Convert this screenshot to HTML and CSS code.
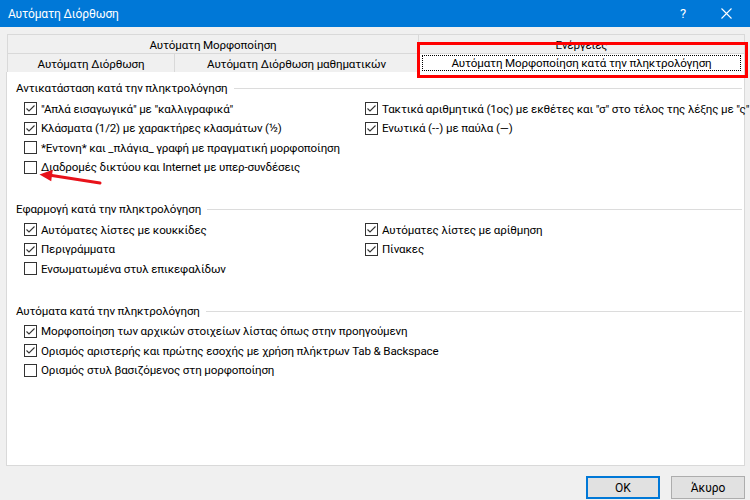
FILE: index.html
```html
<!Doctype html>
<html>
<head>
    <meta charset="UTF-8">
    <title>Αυτόματη Διόρθωση</title>
    <link rel="stylesheet" href="styles.css">
</head>
<body>
<div class="dialog">
    <div class="titlebar">
        <span class="title">Αυτόματη Διόρθωση</span>
        <span class="help">?</span>
        <svg class="close" width="11" height="11" viewBox="0 0 11 11"><path d="M0.5 0.5L10.5 10.5M10.5 0.5L0.5 10.5" stroke="#fff" stroke-width="1.1"/></svg>
    </div>

    <div class="tabs">
        <div class="tab-row">
            <div class="tab w411">Αυτόματη Μορφοποίηση</div>
            <div class="tab grow last">Ενέργειες</div>
        </div>
        <div class="tab-row">
            <div class="tab w167">Αυτόματη Διόρθωση</div>
            <div class="tab w244">Αυτόματη Διόρθωση μαθηματικών</div>
            <div class="tab grow last active"><span class="focus">Αυτόματη Μορφοποίηση κατά την πληκτρολόγηση</span></div>
        </div>
    </div>

    <div class="panel">
        <div class="group">
            <div class="legend"><span>Αντικατάσταση κατά την πληκτρολόγηση</span></div>
            <div class="opts">
                <label class="opt"><span class="box on"></span>"Απλά εισαγωγικά" με "καλλιγραφικά"</label>
                <label class="opt"><span class="box on"></span>Τακτικά αριθμητικά (1ος) με εκθέτες και "σ" στο τέλος της λέξης με "ς"</label>
                <label class="opt"><span class="box on"></span>Κλάσματα (1/2) με χαρακτήρες κλασμάτων (½)</label>
                <label class="opt"><span class="box on"></span>Ενωτικά (<span class="dd">--</span>) με παύλα (—)</label>
                <label class="opt"><span class="box"></span>*Εντονη* και _πλάγια_ γραφή με πραγματική μορφοποίηση</label>
                <label class="opt"></label>
                <label class="opt"><span class="box"></span>Διαδρομές δικτύου και Internet με υπερ-συνδέσεις</label>
            </div>
        </div>

        <div class="group">
            <div class="legend"><span>Εφαρμογή κατά την πληκτρολόγηση</span></div>
            <div class="opts">
                <label class="opt"><span class="box on"></span>Αυτόματες λίστες με κουκκίδες</label>
                <label class="opt"><span class="box on"></span>Αυτόματες λίστες με αρίθμηση</label>
                <label class="opt"><span class="box on"></span>Περιγράμματα</label>
                <label class="opt"><span class="box on"></span>Πίνακες</label>
                <label class="opt"><span class="box"></span>Ενσωματωμένα στυλ επικεφαλίδων</label>
            </div>
        </div>

        <div class="group">
            <div class="legend"><span>Αυτόματα κατά την πληκτρολόγηση</span></div>
            <div class="opts single">
                <label class="opt"><span class="box on"></span>Μορφοποίηση των αρχικών στοιχείων λίστας όπως στην προηγούμενη</label>
                <label class="opt"><span class="box on"></span>Ορισμός αριστερής και πρώτης εσοχής με χρήση πλήκτρων Tab &amp; Backspace</label>
                <label class="opt"><span class="box"></span>Ορισμός στυλ βασιζόμενος στη μορφοποίηση</label>
            </div>
        </div>
    </div>

    <div class="buttons">
        <button class="btn default">OK</button>
        <button class="btn">Άκυρο</button>
    </div>

    <div class="mark"></div>
    <svg class="arrow" width="70" height="25" viewBox="0 0 70 25">
        <path d="M16.9 10.6L65 18" stroke="#e8121a" stroke-width="3" stroke-linecap="round"/>
        <path d="M4.5 9.5L17.8 4.8L16.2 16.2Z" fill="#e8121a"/>
    </svg>
</div>
</body>
</html>
```

FILE: styles.css
```css
body{
    margin: 0;
    padding: 0;
    background: #f0f0f0;
    font-family: Roboto, "Noto Sans", sans-serif;
    font-size: 11.6px;
    letter-spacing: -0.15px;
    color: #000;
}
.dialog{
    width: 750px;height: 500px;
    position: relative;
    overflow: hidden;
    background: #f0f0f0;
}
.titlebar{
    height: 27px;
    background: #0078d7;
    color: #fff;
    display: flex;
    align-items: center;
    padding-left: 8px;
}
.title{
    flex: 1;
    font-size: 12px;
}
.help{
    font-size: 13px;
    margin-right: 35px;
}
.close{
    margin-right: 18px;
}
.tabs{
    margin: 7px 5px 0 7px;
}
.tab-row{
    display: flex;
    height: 19px;
}
.tab{
    box-sizing: border-box;
    border-top: 1px solid #d9d9d9;
    border-left: 1px solid #d9d9d9;
    text-align: center;
    line-height: 20px;
    white-space: nowrap;
    color: #000;
}
.tab.last{
    border-right: 1px solid #d9d9d9;
}
.w411{width: 411px;}
.w167{width: 167px;}
.w244{width: 244px;}
.grow{flex: 1;}
.tab.active{
    background: #fff;
    padding: 1px 3px 0 3px;
}
.focus{
    display: block;
    border: 1px dotted #000;
    line-height: 14px;
    height: 14px;
}
.panel{
    margin: 0 5px 0 6px;
    height: 394px;
    box-sizing: border-box;
    border: 1px solid #d9d9d9;
    border-top: none;
    background: #fff;
    padding: 7px 0 0 9px;
}
.group{
    margin-bottom: 23px;
}
.legend{
    height: 18px;
    display: flex;
    align-items: center;
    margin-right: 2px;
}
.legend:after{
    content: "";
    flex: 1;
    height: 1px;
    background: #dcdcdc;
    margin-left: 6px;
    margin-top: 1px;
}
.opts{
    display: grid;
    grid-template-columns: 341px auto;
    grid-auto-rows: 19.5px;
    padding: 2px 0 0 8px;
}
.opts.single{
    grid-template-columns: auto;
}
.opt{
    display: flex;
    align-items: center;
    white-space: nowrap;
}
.dd{
    letter-spacing: 0.5px;
}
.box{
    width: 13px;height: 13px;
    box-sizing: border-box;
    border: 1px solid #333;
    background: #fff;
    margin-right: 4px;
    flex: none;
    position: relative;
}
.box.on{
    background: #fff url("data:image/svg+xml;utf8,<svg xmlns='http://www.w3.org/2000/svg' width='11' height='11' viewBox='0 0 11 11'><path d='M1.5 5.5L4 8L9.5 2.5' fill='none' stroke='%23333' stroke-width='1.1'/></svg>") no-repeat center;
}
.buttons{
    display: flex;
    justify-content: flex-end;
    gap: 11px;
    padding: 10px 5px 0 0;
}
.btn{
    width: 74px;height: 23px;
    box-sizing: border-box;
    background: #e1e1e1;
    border: 1px solid #adadad;
    font-family: Roboto, "Noto Sans", sans-serif;
    font-size: 12px;
    color: #000;
    padding: 0;
}
.btn.default{
    border: 2px solid #0078d7;
}
.mark{
    position: absolute;
    left: 417px;top: 42px;
    width: 331px;height: 36px;
    box-sizing: border-box;
    border: 3px solid #f00;
}
.arrow{
    position: absolute;
    left: 35px;top: 165px;
}
```
